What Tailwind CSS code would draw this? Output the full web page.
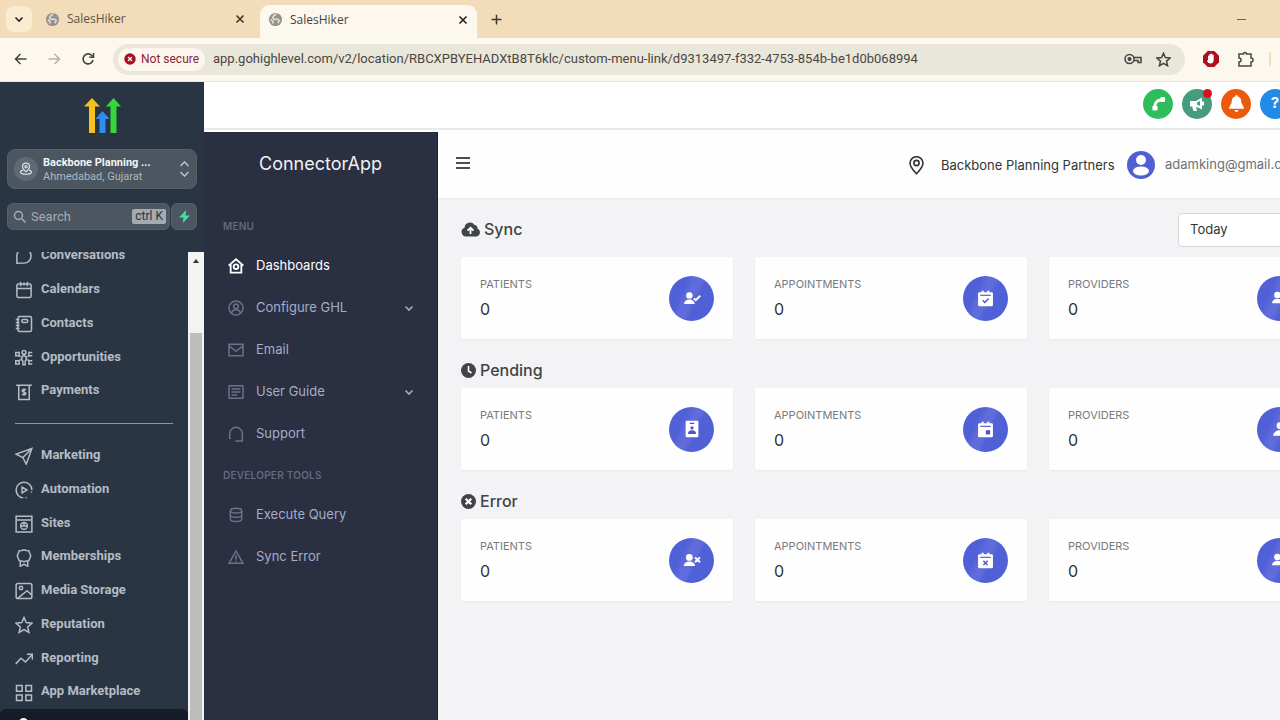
<!DOCTYPE html>
<html lang="en">
<head>
<meta charset="utf-8">
<title>SalesHiker</title>
<script src="https://cdn.jsdelivr.net/npm/@tailwindcss/browser@4"></script>
</head>
<body class="h-screen overflow-hidden flex flex-col bg-[#fcf8ee] font-['Inter',sans-serif]">
<!-- Icon sprite -->
<svg class="hidden" aria-hidden="true">
  <symbol id="globe" viewBox="0 0 16 16"><circle cx="8" cy="8" r="7" fill="#939391"/><path d="M9 2.500 6.500 3.500 5 6l2 2 3-.5 2 1.500-1.500 3M3 8l2 1.500.5 3" fill="none" stroke="#e9dfcf" stroke-width="1.700"/></symbol>
  <symbol id="close" viewBox="0 0 12 12"><path d="m2.500 2.500 7 7m0-7-7 7" fill="none" stroke="currentColor" stroke-width="1.600"/></symbol>
  <symbol id="chev" viewBox="0 0 12 12"><path d="m2.500 4.500 3.500 3.500 3.500-3.500" fill="none" stroke="currentColor" stroke-width="1.600"/></symbol>
  <symbol id="chat" viewBox="0 0 24 24"><path d="M2.500 21.500V13A9.500 9.500 0 1 1 12 21.500z"/></symbol>
  <symbol id="calendar" viewBox="0 0 24 24"><rect x="2.500" y="4" width="19" height="18" rx="2"/><path d="M2.500 10h19M7.500 1v6M16.500 1v6M12 2v4"/></symbol>
  <symbol id="contacts" viewBox="0 0 24 24"><rect x="4" y="2" width="18" height="20" rx="2"/><rect x="9" y="6" width="8" height="4" rx="2"/><path d="M1 6h5M1 10h5M1 14h5M1 18h5"/></symbol>
  <symbol id="opps" viewBox="0 0 24 24"><circle cx="12" cy="4.500" r="2.500"/><path d="M9 14.500V12a3 3 0 0 1 6 0v2.500L13.500 16v5h-3v-5zM1 4.500h4.500V9H1zM5.500 9l2 1.500M23 4.500h-4.500V9H23M18.500 9l-2 1.500M1 20h4.500v-4.500H1zM5.500 15.500l2-1.500M23 20h-4.500v-4.500H23M18.500 15.500l-2-1.500"/></symbol>
  <symbol id="payments" viewBox="0 0 24 24"><path d="M1.500 3h21M5 3v19h14V3M14.500 9.500c-1-1.500-5-1.200-5 .8 0 2.200 5 1.300 5 3.700 0 2-4 2.300-5.200.5M12 7v10"/></symbol>
  <symbol id="send" viewBox="0 0 24 24"><path d="M22.500 2 1.500 9.500l9 4.500 4.500 9zM10.500 14l12-12"/></symbol>
  <symbol id="auto" viewBox="0 0 24 24"><path d="M11 22.500A10.500 10.500 0 1 1 22.500 12M22.300 14l-.5 1.500M14 22.300l1.500-.4M9.500 8v8l6.500-4z"/></symbol>
  <symbol id="sites" viewBox="0 0 24 24"><path d="M1.500 1.500h21v21h-21zM1.500 6.500h21"/><circle cx="12" cy="14.500" r="4.500"/><path d="M8 14.500h8M12 10.500v4"/></symbol>
  <symbol id="award" viewBox="0 0 24 24"><path d="m12 1 3 1 3.500.5 1.300 3.500L21 9l-1.200 3-1.300 3.500-3.500.5-3 1-3-1-3.500-.5L4.200 12 3 9l1.200-3 1.300-3.500L9 2zM7 16v7l5-2.500 5 2.500v-7"/></symbol>
  <symbol id="image" viewBox="0 0 24 24"><rect x="1.500" y="2" width="21" height="20" rx="2.500"/><circle cx="8" cy="8" r="2.300"/><path d="m4 21.500 12-10 6.500 6"/></symbol>
  <symbol id="star" viewBox="0 0 24 24"><path d="m12 2 3 6.800 7.500.8-5.600 5 1.600 7.400-6.500-3.800L5.500 22l1.600-7.400-5.600-5 7.500-.8z"/></symbol>
  <symbol id="trend" viewBox="0 0 24 24"><path d="m1 18.500 7-7.500 6 5 9-10M16 5.500h7.200V13"/></symbol>
  <symbol id="grid" viewBox="0 0 24 24"><path d="M2 2h7.500v7.500H2zM14.500 2H22v7.500h-7.500zM2 14.500h7.500V22H2zM14.500 14.500H22V22h-7.500z"/></symbol>
  <symbol id="home" viewBox="0 0 24 24"><path d="m1 11.500 11-9.500 11 9.500M4 9.500V22h16V9.500"/><circle cx="12" cy="13" r="3.500"/></symbol>
  <symbol id="usercircle" viewBox="0 0 24 24"><circle cx="12" cy="12" r="10.500"/><circle cx="12" cy="9.500" r="3.500"/><path d="M5.500 19.500c1-6.500 12-6.500 13 0"/></symbol>
  <symbol id="mail" viewBox="0 0 24 24"><path d="M1.500 3.500h21v17h-21zM2 6l10 8 10-8"/></symbol>
  <symbol id="article" viewBox="0 0 24 24"><rect x="1.500" y="2.500" width="21" height="19" rx="1"/><path d="M5.500 7.500h13M5.500 12h13M5.500 16.500h8"/></symbol>
  <symbol id="headset" viewBox="0 0 24 24"><path d="M2.500 18V11.500a9.500 9.500 0 0 1 19 0V18M2.500 12v6.500h2M21.500 12v10.500H11"/></symbol>
  <symbol id="db" viewBox="0 0 24 24"><ellipse cx="12" cy="5.500" rx="8.500" ry="3.500"/><path d="M3.500 5.500v13c0 4.500 17 4.500 17 0v-13M3.500 12c0 4.500 17 4.500 17 0"/></symbol>
  <symbol id="warn" viewBox="0 0 24 24"><path d="M12 3 1.500 21.500h21zM12 9v7M12 17.500v2"/></symbol>
  <symbol id="c-usercheck" viewBox="0 0 24 24"><circle cx="8.500" cy="8.500" r="4.300" fill="#fff"/><path d="M1.500 20c0-8 14-8 14 0z" fill="#fff"/><path d="m14.500 12.500 2.500 2.500 6-6" fill="none" stroke="#fff" stroke-width="2.500"/></symbol>
  <symbol id="c-userx" viewBox="0 0 24 24"><circle cx="8.500" cy="8.500" r="4.500" fill="#fff"/><path d="M1 20c0-8 15-8 15 0z" fill="#fff"/><path d="m16 8.500 6.500 6.500m0-6.500L16 15" fill="none" stroke="#fff" stroke-width="2.800"/></symbol>
  <symbol id="c-badge" viewBox="0 0 24 24"><rect x="3.500" y="1" width="17" height="22" rx="1.500" fill="#fff"/><path d="M9 4.500h6M7.500 18c0-5 9-5 9 0z" stroke="#5156be" stroke-width="1.500" fill="#5156be"/><circle cx="12" cy="10.500" r="2.200" fill="#5156be"/></symbol>
  <symbol id="c-cal" viewBox="0 0 24 24"><path d="M3.500 3h3V1h3v2h5V1h3v2h3Q22.500 3 22.500 5v16q0 2-2 2h-17q-2 0-2-2V5q0-2 2-2z" fill="#fff"/><path d="M4.500 7.500h15" stroke="#5156be" stroke-width="1.600"/></symbol>
  <symbol id="c-user" viewBox="0 0 24 24"><circle cx="12" cy="7.500" r="4.500" fill="#fff"/><path d="M3 21c0-10 18-10 18 0z" fill="#fff"/></symbol>
  <symbol id="c-users" viewBox="0 0 24 24"><circle cx="8.500" cy="8" r="4.300" fill="#fff"/><path d="M1.500 19c0-8 14-8 14 0z" fill="#fff"/><circle cx="17" cy="8" r="4" fill="#fff"/><path d="M17 19h6.500c0-5-3-7-7-6z" fill="#fff"/></symbol>
</svg>

<!-- Browser tabs -->
<div class="h-[38px] shrink-0 bg-[#f3dcb9] flex items-center text-[12px] font-['Open_Sans',sans-serif]">
  <button aria-label="Search tabs" class="ml-[6px] size-[26px] rounded-lg bg-[#fbebd1] grid place-items-center text-[#222]"><svg class="size-3"><use href="#chev"/></svg></button>
  <div class="ml-[13px] w-[215px] flex items-center text-[#5d5347]">
    <svg class="size-[15px]"><use href="#globe"/></svg><span class="ml-[7px]">SalesHiker</span>
    <button aria-label="Close tab" class="ml-auto mr-[14px] text-[#40382f]"><svg class="size-3"><use href="#close"/></svg></button>
  </div>
  <div class="self-end h-[33px] w-[217px] rounded-t-[9px] bg-[#fcf8ee] flex items-center text-[#443f39] pb-1 pl-2">
    <svg class="size-[15px]"><use href="#globe"/></svg><span class="ml-[7px]">SalesHiker</span>
    <button aria-label="Close tab" class="ml-auto mr-[8px] text-[#222]"><svg class="size-3"><use href="#close"/></svg></button>
  </div>
  <button aria-label="New tab" class="ml-[13px] text-[#40382f]"><svg class="size-[13px]" viewBox="0 0 12 12"><path d="M6 1.500v9M1.500 6h9" stroke="currentColor" stroke-width="1.400"/></svg></button>
  <button aria-label="Minimize" class="ml-auto mr-[34px] w-[9px] h-3 grid items-center"><span class="h-px bg-[#6b6257]"></span></button>
</div>
<!-- Toolbar -->
<div class="h-[44px] shrink-0 bg-[#fcf8ee] flex items-center text-[#444] pb-px border-b border-[#ebe6da]">
  <button aria-label="Back" class="ml-[13px]"><svg class="size-4" viewBox="0 0 16 16" fill="none" stroke="currentColor" stroke-width="1.500"><path d="M13.500 8h-11m5-5-5 5 5 5"/></svg></button>
  <button aria-label="Forward" class="ml-[17px] text-[#b5b1a9]"><svg class="size-4" viewBox="0 0 16 16" fill="none" stroke="currentColor" stroke-width="1.500"><path d="M2.500 8h11m-5-5 5 5-5 5"/></svg></button>
  <button aria-label="Reload" class="ml-[18px]"><svg class="size-4" viewBox="0 0 16 16" fill="none" stroke="currentColor" stroke-width="1.600"><path d="M13 9a5 5 0 1 1-1.200-4.500L13.500 6"/><path d="M13.500 2v4.200H9.300"/></svg></button>
  <div class="ml-[17px] flex-1 min-w-0 h-[31px] rounded-full bg-[#e9e6da] flex items-center font-['Roboto',sans-serif]">
    <button class="ml-[5px] h-[23px] w-[87px] rounded-full bg-[#fcf6ee] text-[#8f2430] text-[12px] flex items-center gap-[5px] pl-[6px] whitespace-nowrap shrink-0"><svg class="size-3" viewBox="0 0 12 12"><circle cx="6" cy="6" r="5.700" fill="#a5101f"/><path d="m4 4 4 4m0-4-4 4" stroke="#fff" stroke-width="1.200"/></svg>Not secure</button>
    <input aria-label="Address" class="ml-[8px] flex-1 min-w-0 bg-transparent text-[13px] text-[#4a4742]" value="app.gohighlevel.com/v2/location/RBCXPBYEHADXtB8T6klc/custom-menu-link/d9313497-f332-4753-854b-be1d0b068994">
    <svg class="w-[18px] h-3 shrink-0" viewBox="0 0 18 12" fill="none" stroke="#444" stroke-width="1.500"><circle cx="5.500" cy="6" r="4.500"/><circle cx="5.500" cy="6" r="1.300" fill="#444"/><path d="M10 4.500h7v5h-3V7.500h-4"/></svg>
    <svg class="size-[15px] ml-[14px] mr-[14px] shrink-0" fill="none" stroke="#444" stroke-width="2.400"><use href="#star"/></svg>
  </div>
  <svg class="size-[16px] ml-[18px]" viewBox="0 0 16 16"><path d="M4.700 0h6.600L16 4.700v6.600L11.300 16H4.700L0 11.300V4.700z" fill="#ad0f22"/><path d="M5 9V5q.7-1 1.300 0V3.500q.7-1 1.400 0V3q.8-1 1.500 0v1q.8-1 1.500 0v5q-.2 3.500-3 3.500T4 10z" fill="#fff"/></svg>
  <svg class="size-[17px] ml-[18px]" viewBox="0 0 17 17" fill="none" stroke="#444" stroke-width="1.500"><path d="M2 3h4.500a1.500 1.500 0 0 1 3 0H14v4a1.500 1.500 0 0 1 0 4v4H2v-4a2 2 0 0 0 0-4z"/></svg>
  <span class="ml-[15px] mr-[9px] w-[2px] h-[14px] bg-[#f3dfb9]"></span>
</div>

<div class="flex-1 min-h-0 flex">
  <!-- Agency sidebar -->
  <aside class="w-[204px] shrink-0 bg-[#2a3543] flex flex-col font-['Roboto',sans-serif]">
    <svg class="w-[37px] h-[35px] mt-[16px] self-center shrink-0" viewBox="0 0 37 35"><path d="m8 0 8 8.500h-5V35H5V8.500H0z" fill="#f5c21b"/><path d="m29.500 0 7.500 8.500h-4.500V35h-6V8.500H22z" fill="#37d63c"/><path d="m18.500 13 7 8h-4v14h-6V21h-4z" fill="#2d8df0"/></svg>
    <button class="mt-[16px] mx-[7px] h-[40px] shrink-0 rounded-lg bg-[#4b5660] border border-[#566069] flex items-center text-left pl-[6px] pr-[6px]">
      <span class="size-[24px] rounded-full bg-[#606a72] grid place-items-center"><svg class="size-[14px]" viewBox="0 0 24 24" fill="none" stroke="#d9dee2" stroke-width="2"><path d="M12 17C7 12 6 10 6 8a6 6 0 0 1 12 0c0 2-1 4-6 9zM7 14c-8 2-5 7 5 7s13-5 5-7"/><circle cx="12" cy="8" r="2"/></svg></span>
      <span class="ml-[5px] flex-1 pt-[2px] text-[11px] leading-[14px] text-[#aeb7c0]"><b class="block font-bold text-[#f2f4f6]">Backbone Planning ...</b>Ahmedabad, Gujarat</span>
      <svg class="w-[11px] h-[16px]" viewBox="0 0 11 16" fill="none" stroke="#b9c0c6" stroke-width="1.600"><path d="m1.500 5 4-4 4 4M1.500 11l4 4 4-4"/></svg>
    </button>
    <div class="mt-[14px] mx-[7px] h-[27px] shrink-0 flex gap-px">
      <label class="flex-1 rounded-md bg-[#4b5660] border border-[#566069] flex items-center pl-[5px] pr-[3px]">
        <svg class="size-[13px] shrink-0" viewBox="0 0 13 13" fill="none" stroke="#a4adb5" stroke-width="1.500"><circle cx="5.500" cy="5.500" r="4"/><path d="m8.500 8.500 4 4"/></svg>
        <input aria-label="Search" placeholder="Search" class="ml-[5px] flex-1 min-w-0 w-0 bg-transparent text-[13px] placeholder:text-[#a4adb5]">
        <kbd class="h-[15px] px-[3px] rounded-[2px] bg-[#a3aab0] text-[#27323f] text-[12px] leading-[15px] font-['Roboto',sans-serif]">ctrl K</kbd>
      </label>
      <button aria-label="Quick actions" class="w-[26px] rounded-md bg-[#4b5660] border border-[#566069] grid place-items-center"><svg class="size-[13px]" viewBox="0 0 12 12"><path d="M7.500 0 1 7h4L4.500 12 11 5H7z" fill="#3fe0a4"/></svg></button>
    </div>
    <div class="mt-[22px] flex-1 min-h-0 flex">
      <div class="flex-1 flex flex-col min-h-0">
        <nav class="flex-1 min-h-0 overflow-hidden text-[13px] font-bold text-[#b4bcc6]">
          <ul class="-mt-[14px] h-[169px] grid auto-rows-fr pl-[15px] items-center [&_a]:flex [&_a]:items-center [&_a]:gap-[8px] [&_svg]:size-[18px] [&_svg]:fill-none [&_svg]:stroke-current [&_svg]:stroke-2 [&_svg]:mt-[3px]">
            <li><a href="#"><svg><use href="#chat"/></svg>Conversations</a></li>
            <li><a href="#"><svg><use href="#calendar"/></svg>Calendars</a></li>
            <li><a href="#"><svg><use href="#contacts"/></svg>Contacts</a></li>
            <li><a href="#"><svg><use href="#opps"/></svg>Opportunities</a></li>
            <li><a href="#"><svg><use href="#payments"/></svg>Payments</a></li>
          </ul>
          <hr class="ml-[15px] mr-[15px] mt-[16px] mb-[14px] border-[#8d979f]">
          <ul class="h-[270px] grid auto-rows-fr pl-[15px] items-center [&_a]:flex [&_a]:items-center [&_a]:gap-[8px] [&_svg]:size-[18px] [&_svg]:fill-none [&_svg]:stroke-current [&_svg]:stroke-2 [&_svg]:mt-[3px]">
            <li><a href="#"><svg><use href="#send"/></svg>Marketing</a></li>
            <li><a href="#"><svg><use href="#auto"/></svg>Automation</a></li>
            <li><a href="#"><svg><use href="#sites"/></svg>Sites</a></li>
            <li><a href="#"><svg><use href="#award"/></svg>Memberships</a></li>
            <li><a href="#"><svg><use href="#image"/></svg>Media Storage</a></li>
            <li><a href="#"><svg><use href="#star"/></svg>Reputation</a></li>
            <li><a href="#"><svg><use href="#trend"/></svg>Reporting</a></li>
            <li><a href="#"><svg><use href="#grid"/></svg>App Marketplace</a></li>
          </ul>
        </nav>
        <div class="h-[11px] shrink-0 rounded-t-md bg-[#151c28] overflow-hidden"><div class="ml-[19px] mt-[9px] size-[9px] rounded-full bg-white"></div></div>
      </div>
      <div class="w-[16px] bg-[#f3f3f4] flex flex-col items-center">
        <svg class="w-[6px] h-[4px] mt-[7px]" viewBox="0 0 6 4"><path d="M3 0 6 4H0z" fill="#333"/></svg>
        <div class="mt-[70px] flex-1 w-[12px] bg-[#bdbdbe]"></div>
      </div>
    </div>
  </aside>

  <div class="flex-1 min-w-0 flex flex-col">
    <!-- Agency top bar -->
    <header class="h-[48px] shrink-0 bg-white border-b-2 border-[#e9eaec] flex items-center justify-end gap-[9px] pb-[3px] overflow-hidden">
      <button aria-label="Phone" class="size-[30px] shrink-0 rounded-full bg-[#2fbc5b] grid place-items-center"><svg class="size-[15px]" viewBox="0 0 16 16"><path d="M4 14Q3 4 13 4" fill="none" stroke="#fff" stroke-width="3"/><rect x="10" y="1" width="5" height="5.500" rx="1.500" fill="#fff"/><rect x="1.500" y="10.500" width="5.500" height="5" rx="1.500" fill="#fff"/></svg></button>
      <button aria-label="Announcements" class="relative size-[30px] shrink-0 rounded-full bg-[#469c7d] grid place-items-center"><svg class="size-[16px]" viewBox="0 0 16 16"><path d="M1 5h6l6-3.500v12L7 10.500H1zM3 10h4l1 5H4.500z" fill="#fff"/><path d="M8 6.500 11 5v5L8 8.500z" fill="#469c7d"/><path d="M14 5.500v4" stroke="#fff" stroke-width="2"/></svg><span class="absolute top-0 right-0 size-[9px] rounded-full bg-[#d8101c]"></span></button>
      <button aria-label="Notifications" class="size-[30px] shrink-0 rounded-full bg-[#ea5c0c] grid place-items-center"><svg class="size-[17px]" viewBox="0 0 16 16"><path d="M8 0q1 0 1 1.300C12 2 12.500 4 12.500 7L15 12v1H1v-1l2.500-5c0-3 .5-5 3.500-5.700Q7 0 8 0zM6 14h4q-.5 2-2 2t-2-2z" fill="#fff"/></svg></button>
      <button aria-label="Help" class="size-[30px] shrink-0 -mr-[10px] rounded-full bg-[#228be8] text-white text-[15px] font-bold">?</button>
    </header>

    <div class="flex-1 min-h-0 flex pt-[2px] bg-white">
      <!-- Connector sidebar -->
      <aside class="w-[234px] shrink-0 bg-[#2a2f42] border-r border-[#1d202c] text-[13px] text-[#a6acc6]">
        <h1 class="mt-[18px] h-[28px] text-center text-[18px] leading-[28px] text-[#eff0f4]">ConnectorApp</h1>
        <h2 class="mt-[38px] ml-[19px] h-[20px] leading-[20px] text-[10px] font-semibold text-[#626981] tracking-wide">MENU</h2>
        <ul class="mt-[9px] [&_a]:flex [&_a]:items-center [&_a]:h-[42px] [&_a]:pl-[24px] [&_a]:pr-[22px] [&_span]:ml-[12px] [&_.i]:size-[16px] [&_.i]:fill-none [&_.i]:stroke-[#6c7389] [&_.i]:stroke-[2.2]">
          <li><a href="#" class="text-white"><svg class="i stroke-white! stroke-[2.8]!"><use href="#home"/></svg><span>Dashboards</span></a></li>
          <li><a href="#"><svg class="i"><use href="#usercircle"/></svg><span>Configure GHL</span><svg class="size-3 ml-auto"><use href="#chev"/></svg></a></li>
          <li><a href="#"><svg class="i"><use href="#mail"/></svg><span>Email</span></a></li>
          <li><a href="#"><svg class="i"><use href="#article"/></svg><span>User Guide</span><svg class="size-3 ml-auto"><use href="#chev"/></svg></a></li>
          <li><a href="#"><svg class="i"><use href="#headset"/></svg><span>Support</span></a></li>
        </ul>
        <h2 class="mt-[10px] ml-[19px] h-[20px] leading-[20px] text-[10px] font-semibold text-[#626981] tracking-wide">DEVELOPER TOOLS</h2>
        <ul class="mt-[9px] [&_a]:flex [&_a]:items-center [&_a]:h-[42px] [&_a]:pl-[24px] [&_span]:ml-[12px] [&_.i]:size-[16px] [&_.i]:fill-none [&_.i]:stroke-[#6c7389] [&_.i]:stroke-[2.2]">
          <li><a href="#"><svg class="i"><use href="#db"/></svg><span>Execute Query</span></a></li>
          <li><a href="#"><svg class="i"><use href="#warn"/></svg><span>Sync Error</span></a></li>
        </ul>
      </aside>

      <!-- Connector content -->
      <div class="flex-1 min-w-0 flex flex-col bg-[#f3f3f6] overflow-hidden text-[#313533]">
        <header class="h-[66px] shrink-0 bg-[#fefefe] shadow-xs flex items-center pl-[18px]">
          <button aria-label="Toggle menu" class="w-[14px] h-[12px] flex flex-col justify-between mb-[4px]"><span class="h-[2px] bg-[#4b4e55]"></span><span class="h-[2px] bg-[#4b4e55]"></span><span class="h-[2px] bg-[#4b4e55]"></span></button>
          <svg class="w-[15px] h-[19px] ml-auto" viewBox="0 0 15 19" fill="none" stroke="#333" stroke-width="1.600"><path d="M7.500 17.800C3 13 1 10 1 7.200a6.500 6.500 0 0 1 13 0C14 10 12 13 7.500 17.800z"/><circle cx="7.500" cy="7" r="2.600"/></svg>
          <span class="ml-[17px] w-[173px] pt-[2px] whitespace-nowrap text-[13px]">Backbone Planning Partners</span>
          <svg class="ml-[13px] size-[28px] shrink-0" viewBox="0 0 28 28"><circle cx="14" cy="14" r="14" fill="#4f60d3"/><circle cx="14" cy="9" r="5" fill="#fff"/><ellipse cx="14" cy="20" rx="8" ry="4.600" fill="#fff"/></svg>
          <span class="ml-[10px] w-[115px] overflow-hidden whitespace-nowrap text-[13px] text-[#6c7075]">adamking@gmail.com</span>
        </header>
        <main class="flex-1 pl-[23px] pt-[15px]">
          <div class="flex items-center h-[34px]">
            <h2 class="flex items-center gap-[4px] pb-[2px] text-[16px] font-medium text-[#404345]"><svg class="w-[19px] h-[15px]" viewBox="0 0 19 15"><path d="M5 14.500a4.500 4.500 0 0 1-1.500-8.700A5.500 5.500 0 0 1 13.500 3q3 0 3 3.500a4.200 4.200 0 0 1-1.500 8z" fill="#414446"/><path d="M9.500 12V5.500m-3 3.200 3-3 3 3" stroke="#fff" stroke-width="1.800" fill="none"/></svg>Sync</h2>
            <select aria-label="Period" class="ml-auto -mr-[60px] w-[162px] h-[34px] appearance-none rounded border border-[#d6d8dc] bg-white pl-[11px] text-[13px]"><option>Today</option></select>
          </div>
          <section class="mt-[10px] -mr-[41px] grid grid-cols-3 gap-[22px]">
            <article class="h-[82px] bg-[#fefefe] rounded-[2px] shadow-xs flex items-center justify-between pl-[19px] pr-[19px]"><div><p class="mt-[2px] text-[11px] leading-[18px] text-[#777b80]">PATIENTS</p><p class="mt-[2px] text-[16px] leading-[28px]">0</p></div><span class="size-[45px] rounded-full bg-linear-[115deg,#5060d6_30%,#606cdb_42%,#606cdb_52%,#5060d6_60%] grid place-items-center"><svg class="size-[18px]"><use href="#c-usercheck"/></svg></span></article>
            <article class="h-[82px] bg-[#fefefe] rounded-[2px] shadow-xs flex items-center justify-between pl-[19px] pr-[19px]"><div><p class="mt-[2px] text-[11px] leading-[18px] text-[#777b80]">APPOINTMENTS</p><p class="mt-[2px] text-[16px] leading-[28px]">0</p></div><span class="size-[45px] rounded-full bg-linear-[115deg,#5060d6_30%,#606cdb_42%,#606cdb_52%,#5060d6_60%] grid place-items-center"><svg class="size-[17px]" viewBox="0 0 24 24"><use href="#c-cal"/><path d="m8 14.500 3 3 5.500-5.500" fill="none" stroke="#5156be" stroke-width="2"/></svg></span></article>
            <article class="h-[82px] bg-[#fefefe] rounded-[2px] shadow-xs flex items-center justify-between pl-[19px] pr-[19px]"><div><p class="mt-[2px] text-[11px] leading-[18px] text-[#777b80]">PROVIDERS</p><p class="mt-[2px] text-[16px] leading-[28px]">0</p></div><span class="size-[45px] rounded-full bg-linear-[115deg,#5060d6_30%,#606cdb_42%,#606cdb_52%,#5060d6_60%] grid place-items-center"><svg class="size-[18px]"><use href="#c-users"/></svg></span></article>
          </section>
          <h2 class="mt-[19px] h-[24px] flex items-center gap-[4px] text-[16px] font-medium text-[#404345]"><svg class="size-[15px]" viewBox="0 0 15 15"><circle cx="7.500" cy="7.500" r="7.500" fill="#414446"/><path d="M7.500 3v5l3 2" stroke="#fff" stroke-width="1.600" fill="none"/></svg>Pending</h2>
          <section class="mt-[6px] -mr-[41px] grid grid-cols-3 gap-[22px]">
            <article class="h-[82px] bg-[#fefefe] rounded-[2px] shadow-xs flex items-center justify-between pl-[19px] pr-[19px]"><div><p class="mt-[2px] text-[11px] leading-[18px] text-[#777b80]">PATIENTS</p><p class="mt-[2px] text-[16px] leading-[28px]">0</p></div><span class="size-[45px] rounded-full bg-linear-[115deg,#5060d6_30%,#606cdb_42%,#606cdb_52%,#5060d6_60%] grid place-items-center"><svg class="size-[18px]"><use href="#c-badge"/></svg></span></article>
            <article class="h-[82px] bg-[#fefefe] rounded-[2px] shadow-xs flex items-center justify-between pl-[19px] pr-[19px]"><div><p class="mt-[2px] text-[11px] leading-[18px] text-[#777b80]">APPOINTMENTS</p><p class="mt-[2px] text-[16px] leading-[28px]">0</p></div><span class="size-[45px] rounded-full bg-linear-[115deg,#5060d6_30%,#606cdb_42%,#606cdb_52%,#5060d6_60%] grid place-items-center"><svg class="size-[17px]" viewBox="0 0 24 24"><use href="#c-cal"/><path d="M12.500 13h6v6h-6z" fill="#5156be"/></svg></span></article>
            <article class="h-[82px] bg-[#fefefe] rounded-[2px] shadow-xs flex items-center justify-between pl-[19px] pr-[19px]"><div><p class="mt-[2px] text-[11px] leading-[18px] text-[#777b80]">PROVIDERS</p><p class="mt-[2px] text-[16px] leading-[28px]">0</p></div><span class="size-[45px] rounded-full bg-linear-[115deg,#5060d6_30%,#606cdb_42%,#606cdb_52%,#5060d6_60%] grid place-items-center"><svg class="size-[18px]"><use href="#c-user"/></svg></span></article>
          </section>
          <h2 class="mt-[19px] h-[24px] flex items-center gap-[4px] text-[16px] font-medium text-[#404345]"><svg class="size-[15px]" viewBox="0 0 15 15"><circle cx="7.500" cy="7.500" r="7.500" fill="#414446"/><path d="m4.700 4.700 5.600 5.600m0-5.600-5.600 5.600" stroke="#fff" stroke-width="2.200" fill="none"/></svg>Error</h2>
          <section class="mt-[6px] -mr-[41px] grid grid-cols-3 gap-[22px]">
            <article class="h-[82px] bg-[#fefefe] rounded-[2px] shadow-xs flex items-center justify-between pl-[19px] pr-[19px]"><div><p class="mt-[2px] text-[11px] leading-[18px] text-[#777b80]">PATIENTS</p><p class="mt-[2px] text-[16px] leading-[28px]">0</p></div><span class="size-[45px] rounded-full bg-linear-[115deg,#5060d6_30%,#606cdb_42%,#606cdb_52%,#5060d6_60%] grid place-items-center"><svg class="size-[18px]"><use href="#c-userx"/></svg></span></article>
            <article class="h-[82px] bg-[#fefefe] rounded-[2px] shadow-xs flex items-center justify-between pl-[19px] pr-[19px]"><div><p class="mt-[2px] text-[11px] leading-[18px] text-[#777b80]">APPOINTMENTS</p><p class="mt-[2px] text-[16px] leading-[28px]">0</p></div><span class="size-[45px] rounded-full bg-linear-[115deg,#5060d6_30%,#606cdb_42%,#606cdb_52%,#5060d6_60%] grid place-items-center"><svg class="size-[17px]" viewBox="0 0 24 24"><use href="#c-cal"/><path d="m9 12.500 6 6m0-6-6 6" stroke="#5156be" stroke-width="2"/></svg></span></article>
            <article class="h-[82px] bg-[#fefefe] rounded-[2px] shadow-xs flex items-center justify-between pl-[19px] pr-[19px]"><div><p class="mt-[2px] text-[11px] leading-[18px] text-[#777b80]">PROVIDERS</p><p class="mt-[2px] text-[16px] leading-[28px]">0</p></div><span class="size-[45px] rounded-full bg-linear-[115deg,#5060d6_30%,#606cdb_42%,#606cdb_52%,#5060d6_60%] grid place-items-center"><svg class="size-[18px]"><use href="#c-users"/></svg></span></article>
          </section>
        </main>
      </div>
    </div>
  </div>
</div>
</body>
</html>
